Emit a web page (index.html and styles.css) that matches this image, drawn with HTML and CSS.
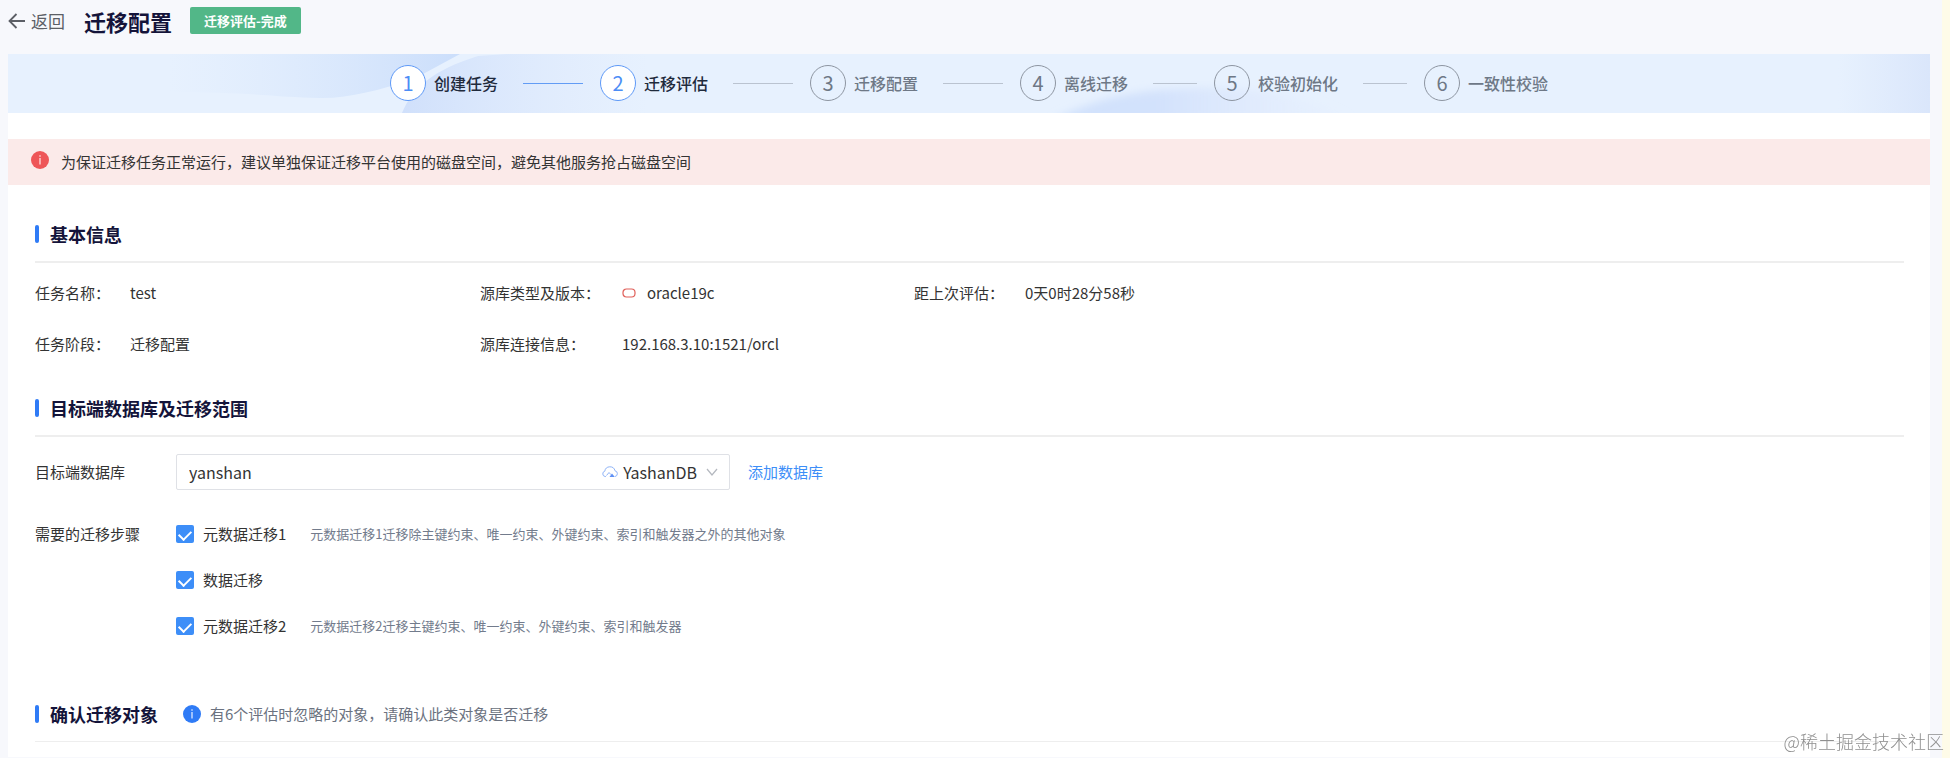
FILE: index.html
```html
<!DOCTYPE html>
<html lang="zh-CN">
<head>
    <meta charset="UTF-8">
    <meta name="viewport" content="width=device-width, initial-scale=1.0">
    <title>迁移配置</title>
    <link rel="stylesheet" href="styles.css">
</head>
<body>
    <header class="page-header">
        <a class="back" href="#">
            <svg width="18" height="16" viewBox="0 0 18 16" fill="none" stroke="currentColor" stroke-width="1.8"><path d="M17 8H1.5M8.5 1L1.5 8l7 7"/></svg>
            返回
        </a>
        <h1>迁移配置</h1>
        <span class="tag">迁移评估-完成</span>
    </header>

    <main class="panel">
        <div class="steps-bar">
            <svg class="steps-bg" viewBox="0 0 1922 59" preserveAspectRatio="none">
                <defs>
                    <linearGradient id="wave-left" x1="0" x2="1">
                        <stop offset="0" stop-color="#d8e7fc" stop-opacity="0"/>
                        <stop offset="1" stop-color="#cbdefb"/>
                    </linearGradient>
                    <linearGradient id="wave-mid" x1="0" x2="1">
                        <stop offset="0" stop-color="#d0e0fb"/>
                        <stop offset="1" stop-color="#dbe7fc" stop-opacity="0"/>
                    </linearGradient>
                    <linearGradient id="wave-bottom" x1="0" x2="1">
                        <stop offset="0" stop-color="#d0e1fc"/>
                        <stop offset="0.35" stop-color="#d3e2fc"/>
                        <stop offset="1" stop-color="#e3ebfd" stop-opacity="0"/>
                    </linearGradient>
                    <linearGradient id="edge" x1="0" x2="1">
                        <stop offset="0" stop-color="#dbe7fb" stop-opacity="0"/>
                        <stop offset="1" stop-color="#dae6fb"/>
                    </linearGradient>
                    <filter id="soft" x="-10%" y="-20%" width="120%" height="140%">
                        <feGaussianBlur stdDeviation="4"/>
                    </filter>
                </defs>
                <path d="M160 0H452L404 26C370 36 340 45 310 44C270 43 240 38 160 38Z" fill="url(#wave-left)"/>
                <path d="M394 59C404 34 425 16 470 2L500 0H640V59Z" fill="url(#wave-mid)"/>
                <path d="M1045 66C1090 42 1140 34 1200 34S1300 44 1350 66Z" fill="url(#wave-bottom)" filter="url(#soft)"/>
                <path d="M1830 0H1922V59H1830Z" fill="url(#edge)"/>
            </svg>
            <ol class="steps">
                <li class="step active"><span class="num">1</span><span class="name">创建任务</span><i class="line"></i></li>
                <li class="step active next"><span class="num">2</span><span class="name">迁移评估</span><i class="line"></i></li>
                <li class="step"><span class="num">3</span><span class="name">迁移配置</span><i class="line"></i></li>
                <li class="step"><span class="num">4</span><span class="name">离线迁移</span><i class="line short"></i></li>
                <li class="step"><span class="num">5</span><span class="name">校验初始化</span><i class="line short"></i></li>
                <li class="step"><span class="num">6</span><span class="name">一致性校验</span></li>
            </ol>
        </div>

        <div class="alert">
            <svg class="alert-icon" width="18" height="18" viewBox="0 0 18 18"><circle cx="9" cy="9" r="9" fill="#ee5658"/><path d="M9 4.2v1.6M9 7v6.5" stroke="#ffd5d5" stroke-width="1.4"/></svg>
            <span>为保证迁移任务正常运行，建议单独保证迁移平台使用的磁盘空间，避免其他服务抢占磁盘空间</span>
        </div>

        <section class="section">
            <div class="section-title">
                <h2>基本信息</h2>
            </div>
            <dl class="info">
                <dt>任务名称：</dt>
                <dd>test</dd>
                <dt>源库类型及版本：</dt>
                <dd>
                    <svg class="oracle-icon" width="14" height="10" viewBox="0 0 14 10" fill="none" stroke="#e0605a" stroke-width="1.2"><rect x="1" y="1" width="12" height="8" rx="3.5"/></svg>
                    oracle19c
                </dd>
                <dt>距上次评估：</dt>
                <dd>0天0时28分58秒</dd>
                <dt>任务阶段：</dt>
                <dd>迁移配置</dd>
                <dt>源库连接信息：</dt>
                <dd>192.168.3.10:1521/orcl</dd>
            </dl>
        </section>

        <section class="section">
            <div class="section-title">
                <h2>目标端数据库及迁移范围</h2>
            </div>
            <div class="form-row">
                <label class="form-label" for="target-db">目标端数据库</label>
                <div class="select-box">
                    <select id="target-db">
                        <option selected>yanshan</option>
                    </select>
                    <span class="select-extra">
                        <svg width="16" height="12" viewBox="0 0 16 12" fill="none" stroke="#8fb3f7"><path d="M4 10.5H3.2A2.7 2.7 0 0 1 2.8 5.2 5.2 5.2 0 0 1 13 4.8a2.9 2.9 0 0 1 0 5.7"/><path d="M4.5 9.5L7 6.5l2 2.2"/><path d="M7.5 11L10 7.5l2.8 3.5z" fill="#5f90f5" stroke="none"/></svg>
                        YashanDB
                        <svg class="arrow" width="12" height="8" viewBox="0 0 12 8" fill="none" stroke="#b4b8bf" stroke-width="1.2"><path d="M1 1l5 6 5-6"/></svg>
                    </span>
                </div>
                <a class="add-link" href="#">添加数据库</a>
            </div>
            <div class="form-row steps-row">
                <span class="form-label">需要的迁移步骤</span>
                <div class="checks">
                    <div class="check">
                        <input type="checkbox" id="meta1" checked>
                        <label for="meta1">元数据迁移1</label>
                        <span class="desc">元数据迁移1迁移除主键约束、唯一约束、外键约束、索引和触发器之外的其他对象</span>
                    </div>
                    <div class="check">
                        <input type="checkbox" id="data" checked>
                        <label for="data">数据迁移</label>
                    </div>
                    <div class="check">
                        <input type="checkbox" id="meta2" checked>
                        <label for="meta2">元数据迁移2</label>
                        <span class="desc">元数据迁移2迁移主键约束、唯一约束、外键约束、索引和触发器</span>
                    </div>
                </div>
            </div>
        </section>

        <section class="section">
            <div class="section-title light">
                <h2>确认迁移对象</h2>
                <svg class="tip-icon" width="18" height="18" viewBox="0 0 18 18"><circle cx="9" cy="9" r="9" fill="#2f7bf6"/><path d="M9 4.2v1.6M9 7v6.5" stroke="#cfe0ff" stroke-width="1.4"/></svg>
                <span class="tip">有6个评估时忽略的对象，请确认此类对象是否迁移</span>
            </div>
        </section>
    </main>

    <div class="watermark">@稀土掘金技术社区</div>
</body>
</html>
```
FILE: styles.css
```css
* {
    margin: 0;
    padding: 0;
    box-sizing: border-box;
}
body {
    font-family: 'Noto Sans CJK SC', sans-serif;
    font-size: 15px;
    line-height: 24px;
    color: #333;
    background-color: #f7f8fc;
    border-right: 8px solid #fefbe8;
    min-height: 100vh;
    padding: 0 12px 0 8px;
}
a {
    text-decoration: none;
}
.page-header {
    display: flex;
    align-items: center;
    height: 54px;
    padding-bottom: 13px;
}
.back {
    display: flex;
    align-items: center;
    gap: 5px;
    font-size: 17px;
    color: #5c5f66;
}
h1 {
    margin-left: 19px;
    font-size: 22px;
    font-weight: 700;
    color: #14143a;
}
.tag {
    margin-left: 18px;
    padding: 0 14px;
    line-height: 27px;
    font-size: 13px;
    font-weight: 700;
    color: #fff;
    background-color: #52b788;
    border-radius: 2px;
}
.panel {
    background-color: #fff;
    padding-bottom: 15px;
}

/* steps */
.steps-bar {
    position: relative;
    height: 59px;
    background-color: #e7f1fe;
}
.steps-bg {
    position: absolute;
    top: 0;
    left: 0;
    width: 100%;
    height: 100%;
}
.steps {
    position: relative;
    display: flex;
    justify-content: center;
    align-items: center;
    height: 100%;
    padding-bottom: 1px;
    list-style: none;
}
.step {
    display: flex;
    align-items: center;
    font-size: 16px;
    font-weight: 500;
    color: #6e7886;
}
.num {
    width: 36px;
    height: 36px;
    margin-right: 8px;
    border: 1px solid #8d95a1;
    border-radius: 50%;
    line-height: 34px;
    text-align: center;
    font-size: 20px;
    font-weight: 400;
}
.line {
    width: 60px;
    height: 1px;
    margin: 0 17px 0 25px;
    background-color: #bac3d0;
}
.line.short {
    width: 44px;
}
.step.active {
    color: #1f2a3c;
}
.step.active .num {
    color: #4c8df6;
    border-color: #5e99f7;
    background-color: #fff;
}
.step.active .line {
    background-color: #629cf5;
}
.step.next .line {
    background-color: #bac3d0;
}

/* alert */
.alert {
    display: flex;
    align-items: center;
    gap: 12px;
    height: 46px;
    margin: 26px 0 22px;
    padding: 0 23px;
    background-color: #fbeae9;
}
.alert-icon {
    margin-bottom: 4px;
}

/* sections */
.section {
    padding: 0 26px 0 27px;
}
.section-title {
    display: flex;
    align-items: center;
    height: 56px;
    border-bottom: 2px solid #eee;
}
.section-title.light {
    border-bottom: 1px solid #eee;
}
h2 {
    display: flex;
    align-items: center;
    font-size: 18px;
    font-weight: 700;
    color: #14143a;
}
h2::before {
    content: '';
    width: 4px;
    height: 18px;
    margin-right: 11px;
    border-radius: 2px;
    background-color: #2f7bf6;
}
.info {
    display: grid;
    grid-template-columns: 95px 350fr 142px 292fr 111px 879fr;
    row-gap: 27px;
    padding: 18px 0 25px;
}
.info dd {
    display: flex;
    align-items: center;
}
.oracle-icon {
    margin-right: 11px;
}
.form-row {
    display: flex;
    align-items: center;
    padding-top: 17px;
}
.form-label {
    width: 141px;
}
.select-box {
    position: relative;
    width: 554px;
}
.select-box select {
    appearance: none;
    display: block;
    width: 100%;
    height: 36px;
    padding: 0 12px;
    border: 1px solid #dfe1e6;
    border-radius: 2px;
    background-color: #fff;
    font-family: inherit;
    font-size: 16px;
    color: #333;
}
.select-extra {
    position: absolute;
    top: 0;
    right: 12px;
    display: flex;
    align-items: center;
    gap: 5px;
    height: 36px;
    font-size: 16px;
    pointer-events: none;
}
.arrow {
    margin-left: 4px;
}
.add-link {
    margin-left: 18px;
    color: #3d8ef8;
}
.steps-row {
    align-items: flex-start;
    padding: 32px 0 48px;
}
.checks {
    display: flex;
    flex-direction: column;
    gap: 22px;
}
.check {
    display: flex;
    align-items: center;
}
.check input {
    appearance: none;
    width: 18px;
    height: 18px;
    margin-right: 9px;
    border-radius: 2px;
    background-color: #3d8ef8;
}
.check input::before {
    content: '';
    display: block;
    width: 10px;
    height: 6px;
    margin: 5px auto 0;
    border-left: 2px solid #fff;
    border-bottom: 2px solid #fff;
    transform: rotate(-45deg);
}
.desc {
    margin-left: 24px;
    font-size: 13px;
    color: #727b8c;
}
.tip-icon {
    margin: 0 9px 0 25px;
}
.tip {
    color: #6b7280;
}
.watermark {
    position: fixed;
    right: 6px;
    bottom: 5px;
    font-size: 18px;
    font-weight: 300;
    color: #8f8f8f;
}
```
